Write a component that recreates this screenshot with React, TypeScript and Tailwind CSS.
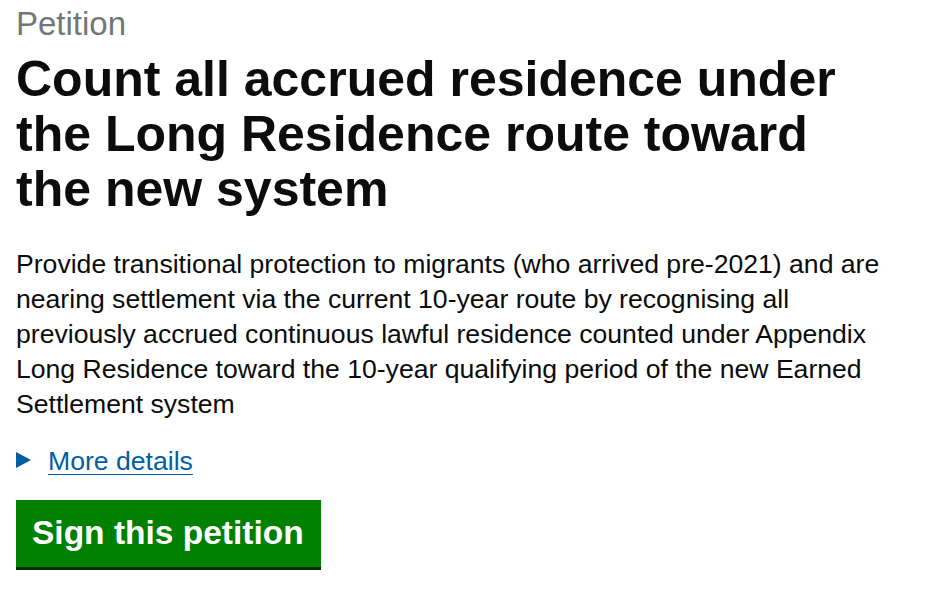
export default function App() {
  return (
    <div className="min-h-screen bg-white px-4 pt-1 font-['Liberation_Sans',Arial,sans-serif] text-[#0b0c0c]">
      <p className="text-[33px] leading-[40px] text-[#6f777b]">Petition</p>
      <h1 className="mt-2 max-w-[860px] text-[50px] font-bold leading-[55px]">
        Count all accrued residence under the Long Residence route toward the new system
      </h1>
      <p className="mt-[30px] max-w-[890px] text-[26.6px] leading-[35px]">
        Provide transitional protection to migrants (who arrived pre-2021) and are nearing
        settlement via the current 10-year route by recognising all previously accrued
        continuous lawful residence counted under Appendix Long Residence toward the 10-year
        qualifying period of the new Earned Settlement system
      </p>
      <div className="mt-[22px] flex items-start gap-[17px]">
        <svg width="15" height="16" viewBox="0 0 15 16" className="mt-[8px] shrink-0 text-[#005ea5]">
          <path d="M0 0 L15 8 L0 16 Z" fill="currentColor" />
        </svg>
        <a
          href="#"
          className="text-[26.6px] leading-[35px] text-[#005ea5] underline decoration-1 underline-offset-[4px]"
        >
          More details
        </a>
      </div>
      <button className="mt-[21px] bg-[#008000] pl-4 pr-[17px] pt-[13px] pb-[14px] text-[33.5px] font-bold leading-[40px] text-white shadow-[0_3px_0_#002d00]">
        Sign this petition
      </button>
    </div>
  );
}
